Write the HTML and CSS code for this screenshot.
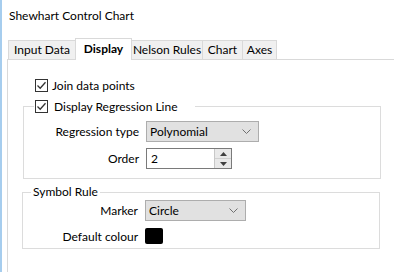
FILE: index.html
```html
<!DOCTYPE html>
<html lang="en">
<head>
    <meta charset="UTF-8">
    <meta name="viewport" content="width=device-width, initial-scale=1.0">
    <title>Shewhart Control Chart</title>
    <link rel="stylesheet" href="styles.css">
</head>
<body>
    <div class="window">
        <div class="titlebar">Shewhart Control Chart</div>

        <div class="tabs">
            <div class="tab tab-input">Input Data</div>
            <div class="tab tab-display active">Display</div>
            <div class="tab tab-nelson">Nelson Rules</div>
            <div class="tab tab-chart">Chart</div>
            <div class="tab tab-axes">Axes</div>
        </div>

        <div class="panel">
            <label class="check-row">
                <span class="checkbox">
                    <svg width="11" height="11" viewBox="0 0 11 11"><path d="M1.5 5.5 L4.2 8.2 L9.5 2.2" fill="none" stroke="#333" stroke-width="1.3"/></svg>
                </span>
                Join data points
            </label>

            <fieldset class="group group-regression">
                <legend class="check-legend">
                    <span class="checkbox">
                        <svg width="11" height="11" viewBox="0 0 11 11"><path d="M1.5 5.5 L4.2 8.2 L9.5 2.2" fill="none" stroke="#333" stroke-width="1.3"/></svg>
                    </span>
                    Display Regression Line
                </legend>
                <div class="form-row">
                    <span class="field-label">Regression type</span>
                    <div class="dropdown dropdown-wide">
                        <span>Polynomial</span>
                        <svg class="chevron" width="9" height="5" viewBox="0 0 9 5"><path d="M0.5 0.5 L4.5 4.5 L8.5 0.5" fill="none" stroke="#707070" stroke-width="1"/></svg>
                    </div>
                </div>
                <div class="form-row">
                    <span class="field-label">Order</span>
                    <div class="spinbox">
                        <span class="spin-value">2</span>
                        <div class="spin-buttons">
                            <div class="spin-btn"><svg width="7" height="4" viewBox="0 0 7 4"><path d="M0 4 L3.5 0 L7 4 Z" fill="#404040"/></svg></div>
                            <div class="spin-btn"><svg width="7" height="4" viewBox="0 0 7 4"><path d="M0 0 L3.5 4 L7 0 Z" fill="#404040"/></svg></div>
                        </div>
                    </div>
                </div>
            </fieldset>

            <fieldset class="group group-symbol">
                <legend class="text-legend">Symbol Rule</legend>
                <div class="form-row">
                    <span class="field-label">Marker</span>
                    <div class="dropdown dropdown-narrow">
                        <span>Circle</span>
                        <svg class="chevron" width="9" height="5" viewBox="0 0 9 5"><path d="M0.5 0.5 L4.5 4.5 L8.5 0.5" fill="none" stroke="#707070" stroke-width="1"/></svg>
                    </div>
                </div>
                <div class="form-row colour-row">
                    <span class="field-label">Default colour</span>
                    <span class="swatch"></span>
                </div>
            </fieldset>
        </div>
    </div>
</body>
</html>
```

FILE: styles.css
```css
html, body {
    margin: 0;
    height: 100%;
    overflow: hidden;
    background: white;
}
body {
    font-family: Lato, 'Noto Sans', Arial, sans-serif;
    font-size: 12px;
    color: #000;
}
.window {
    height: 100%;
    box-sizing: border-box;
    border-left: 2px solid #a6cdee;
    display: flex;
    flex-direction: column;
}
.titlebar {
    height: 32px;
    line-height: 32px;
    padding-left: 7px;
    margin-bottom: 6px;
}
.tabs {
    display: flex;
    align-items: flex-end;
    height: 21px;
    padding-left: 6px;
    position: relative;
    z-index: 1;
}
.tab {
    height: 19px;
    line-height: 18px;
    box-sizing: border-box;
    border: 1px solid #d9d9d9;
    border-bottom: none;
    background: #f0f0f0;
    text-align: center;
    white-space: nowrap;
    margin-left: -1px;
}
.tab-input { width: 68px; margin-left: 0; }
.tab-display { width: 57px; }
.tab-nelson { width: 72px; }
.tab-chart { width: 41px; }
.tab-axes { width: 35px; }
.tab.active {
    height: 22px;
    line-height: 20px;
    margin-bottom: -1px;
    background: white;
    font-weight: bold;
}
.panel {
    flex: 1;
    margin-left: 5px;
    border-top: 1px solid #d9d9d9;
    border-left: 1px solid #d9d9d9;
    padding-top: 17px;
}
.check-row,
.check-legend {
    display: flex;
    align-items: center;
    height: 16px;
    gap: 4px;
}
.check-row {
    margin-left: 27px;
}
.checkbox {
    width: 13px;
    height: 13px;
    box-sizing: border-box;
    border: 1px solid #333;
    background: white;
    display: flex;
    align-items: center;
    justify-content: center;
}
.checkbox svg {
    display: block;
}
.group {
    border: 1px solid #dcdcdc;
    padding: 0;
    margin: 0;
    box-sizing: border-box;
}
.group-regression {
    margin: 5px 0 0 15px;
    width: 358px;
    padding: 7px 0 9px 0;
}
.check-legend {
    margin-left: 10px;
    padding: 0 17px 0 1px;
    gap: 6px;
}
.group-symbol {
    margin: 5px 0 0 14px;
    width: 358px;
    padding: 0 0 4px 0;
}
.text-legend {
    margin-left: 8px;
    padding: 0 2px;
    line-height: 16px;
}
.form-row {
    display: grid;
    grid-template-columns: 115px auto;
    column-gap: 7px;
    align-items: center;
    margin-bottom: 6px;
}
.form-row:last-child {
    margin-bottom: 0;
}
.field-label {
    text-align: right;
}
.dropdown {
    height: 21px;
    box-sizing: border-box;
    border: 1px solid #adadad;
    background: #e1e1e1;
    display: flex;
    align-items: center;
    justify-content: space-between;
    padding: 0 7px 0 3px;
}
.dropdown-wide { width: 113px; }
.dropdown-narrow { width: 101px; }
.spinbox {
    width: 86px;
    height: 21px;
    box-sizing: border-box;
    border: 1px solid #7a7a7a;
    background: white;
    display: flex;
}
.spin-value {
    flex: 1;
    padding-left: 4px;
    line-height: 19px;
}
.spin-buttons {
    width: 16px;
    display: flex;
    flex-direction: column;
    border-left: 1px solid #c8c8c8;
}
.spin-btn {
    flex: 1;
    background: #e9e9e9;
    display: flex;
    align-items: center;
    justify-content: center;
}
.spin-btn + .spin-btn {
    border-top: 1px solid #d0d0d0;
}
.colour-row {
    margin-top: 7px;
}
.swatch {
    width: 18px;
    height: 16px;
    background: black;
    border-radius: 2px;
}
```
